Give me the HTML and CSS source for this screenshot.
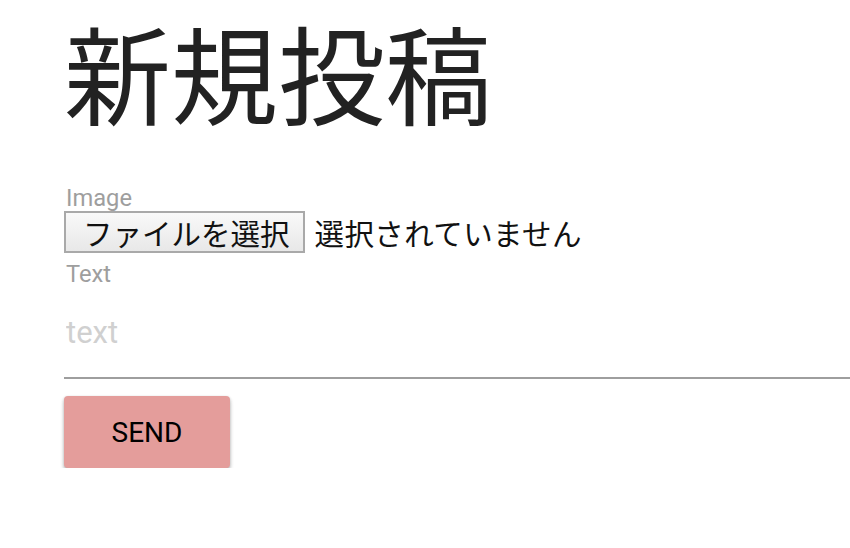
FILE: index.html
```html
<!DOCTYPE html>
<html lang="ja">
<head>
<meta charset="utf-8">
<title>新規投稿</title>
<link rel="stylesheet" href="styles.css">
</head>
<body>
<main class="container">
  <h1 class="title">新規投稿</h1>
  <form class="post-form">
    <label class="field-label">Image</label>
    <div class="file-row">
      <button type="button" class="file-button">ファイルを選択</button>
      <span class="file-status">選択されていません</span>
    </div>
    <label class="field-label field-label-text">Text</label>
    <input class="text-input" type="text" placeholder="text">
    <button type="button" class="send-button">SEND</button>
  </form>
</main>
</body>
</html>
```

FILE: styles.css
```css
html, body {
  margin: 0;
  padding: 0;
  background: #ffffff;
  overflow: hidden;
}

body {
  font-family: Roboto, "Noto Sans CJK JP", sans-serif;
  color: #222222;
}

.container {
  padding: 0 0 0 64px;
}

.title {
  margin: 0;
  padding-top: 0;
  font-family: "Noto Sans CJK JP", sans-serif;
  font-weight: 400;
  font-size: 107px;
  line-height: 142px;
  color: #222222;
}

.post-form {
  display: flex;
  flex-direction: column;
  align-items: flex-start;
  margin-top: 43px;
}

.field-label {
  font-family: Roboto, sans-serif;
  font-size: 23.7px;
  line-height: 26px;
  color: #9e9e9e;
  padding-left: 2px;
}

.file-row {
  display: flex;
  align-items: center;
  gap: 10px;
  height: 42px;
}

.file-button {
  height: 42px;
  box-sizing: border-box;
  padding: 0 13px 0 17px;
  border: 2px solid #a9a9a9;
  border-radius: 0;
  background: linear-gradient(#f9f9f9, #e8e8e8);
  font-family: "Noto Sans CJK JP", sans-serif;
  font-size: 29.5px;
  line-height: 36px;
  color: #111111;
}

.file-status {
  font-family: "Noto Sans CJK JP", sans-serif;
  font-size: 29.5px;
  line-height: 36px;
  letter-spacing: 0.4px;
  color: #111111;
}

.field-label-text {
  margin-top: 8px;
}

.text-input {
  width: 786px;
  box-sizing: border-box;
  height: 92px;
  margin: 0;
  padding: 27px 0 27px 2px;
  border: none;
  border-bottom: 2px solid #9e9e9e;
  outline: none;
  background: transparent;
  font-family: Roboto, sans-serif;
  font-size: 31px;
  line-height: 36px;
  color: #222222;
}

.text-input::placeholder {
  color: #d0d0d0;
}

.send-button {
  margin-top: 17px;
  width: 166px;
  height: 72px;
  border: none;
  border-radius: 4px;
  background: #e49d9b;
  box-shadow: 0 3px 4px 0 rgba(0,0,0,0.22), 0 1px 3px 0 rgba(0,0,0,0.18);
  font-family: Roboto, sans-serif;
  font-size: 28px;
  color: #000000;
}
```
